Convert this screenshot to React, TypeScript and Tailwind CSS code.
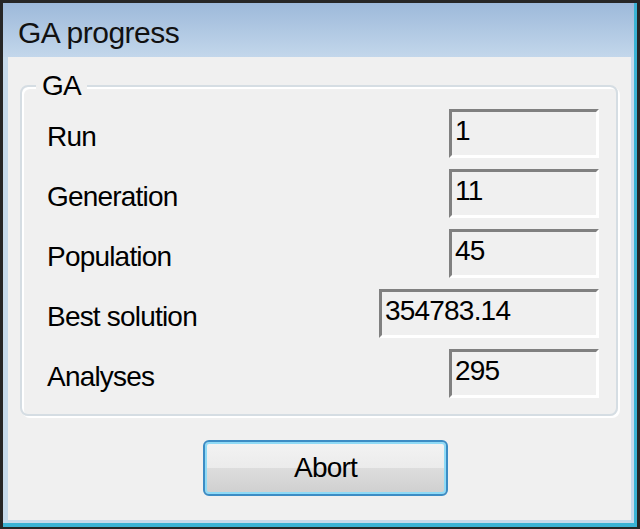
const font = { fontFamily: '"Liberation Sans", Arial, sans-serif' }

const rows = [
  { label: "Run", value: "1", wide: false },
  { label: "Generation", value: "11", wide: false },
  { label: "Population", value: "45", wide: false },
  { label: "Best solution", value: "354783.14", wide: true },
  { label: "Analyses", value: "295", wide: false },
]

function Field({ value, wide }: { value: string; wide: boolean }) {
  return (
    <div
      className={`${wide ? "w-[220px]" : "w-[150px]"} h-[49px] bg-[#f0f0f0] border-t-[3px] border-l-[3px] border-t-[#808080] border-l-[#808080] border-b-[3px] border-r-[3px] border-b-white border-r-white pl-[3px] pt-[5px] text-[28px] leading-[28px] tracking-[-0.8px] text-black`}
    >
      {value}
    </div>
  )
}

export default function App() {
  return (
    <div className="w-[640px] h-[529px] bg-[#262626] pt-[3px] pl-[3px] pr-[3px] pb-[2px]" style={font}>
      <div className="h-[524px] bg-[#c6daeb] border-r-[3px] border-b-[4px] border-[#3ab3d4]">
        {/* title bar */}
        <div className="h-[54px] bg-gradient-to-b from-[#9db9da] to-[#c3d7eb] pl-[15px] pt-[15px] text-[30px] leading-[30px] tracking-[-0.5px] text-[#111]">
          GA progress
        </div>
        <div className="pl-[5px] pr-[3px]">
          <div className="h-[463px] bg-[#f0f0f0] pt-[28px] pl-[12px] pr-[13px]">
            {/* group box */}
            <div className="relative border-2 border-[#d5dde3] rounded-[8px] shadow-[2px_2px_0_white,inset_2px_2px_0_white] pt-[22px] pb-[16px] pl-[25px] pr-[17px]">
              <span className="absolute left-[14px] -top-[15px] bg-[#f0f0f0] px-[6px] text-[28px] leading-[28px] tracking-[-0.8px] text-black">
                GA
              </span>
              <div className="flex flex-col gap-[11px]">
                {rows.map((r) => (
                  <div key={r.label} className="flex justify-between h-[49px]">
                    <span className="pt-[14px] text-[28px] leading-[28px] tracking-[-0.8px] text-black">
                      {r.label}
                    </span>
                    <Field value={r.value} wide={r.wide} />
                  </div>
                ))}
              </div>
            </div>
            {/* button */}
            <div className="pt-[24px] pl-[183px]">
              <button className="w-[245px] h-[56px] rounded-[6px] border-2 border-[#3c8cc4] shadow-[inset_0_0_0_2px_#8fdaf6] bg-[linear-gradient(to_bottom,#f3f3f3_0%,#ebebeb_50%,#dddddd_50%,#cfcfcf_100%)] text-[28px] leading-[28px] tracking-[-0.8px] text-black">
                Abort
              </button>
            </div>
          </div>
        </div>
      </div>
    </div>
  )
}
